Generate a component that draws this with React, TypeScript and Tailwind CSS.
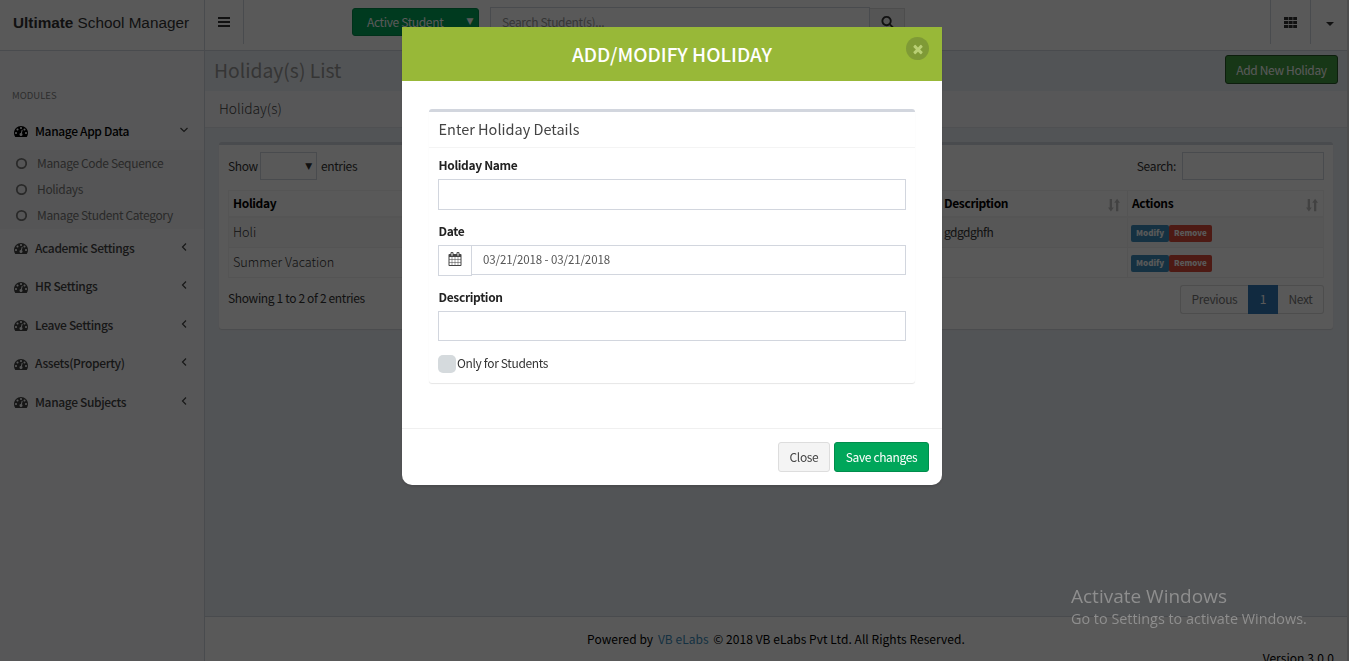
import { useState } from 'react';
import type { ReactNode } from 'react';

const Glyph = ({ d, className }: { d: string; className: string }) => (
  <svg viewBox="0 0 1792 1792" fill="currentColor" className={className}>
    <path d={d} />
  </svg>
);

const TACHOMETER =
  'M384 1152q0-53-37.5-90.5t-90.5-37.5-90.5 37.5-37.5 90.5 37.5 90.5 90.5 37.5 90.5-37.5 37.5-90.5zm192-448q0-53-37.5-90.5t-90.5-37.5-90.5 37.5-37.5 90.5 37.5 90.5 90.5 37.5 90.5-37.5 37.5-90.5zm428 481l101-382q6-26-7.5-48.5t-38.5-29.5-48 6.5-30 39.5l-101 382q-60 5-107 43.5t-63 98.5q-20 77 20 146t117 89 146-20 89-117q16-60-6-117t-72-91zm660-33q0-53-37.5-90.5t-90.5-37.5-90.5 37.5-37.5 90.5 37.5 90.5 90.5 37.5 90.5-37.5 37.5-90.5zm-640-640q0-53-37.5-90.5t-90.5-37.5-90.5 37.5-37.5 90.5 37.5 90.5 90.5 37.5 90.5-37.5 37.5-90.5zm448 192q0-53-37.5-90.5t-90.5-37.5-90.5 37.5-37.5 90.5 37.5 90.5 90.5 37.5 90.5-37.5 37.5-90.5zm320 448q0 261-141 483-19 29-54 29h-1402q-35 0-54-29-141-221-141-483 0-182 71-348t191-286 286-191 348-71 348 71 286 191 191 286 71 348z';
const CALENDAR =
  'M192 1664h288v-288h-288v288zm352 0h320v-288h-320v288zm-352-352h288v-320h-288v320zm352 0h320v-320h-320v320zm-352-384h288v-288h-288v288zm736 736h320v-288h-320v288zm-384-736h320v-288h-320v288zm768 736h288v-288h-288v288zm-384-352h320v-320h-320v320zm-352-864v-288q0-13-9.5-22.5t-22.5-9.5h-64q-13 0-22.5 9.5t-9.5 22.5v288q0 13 9.5 22.5t22.5 9.5h64q13 0 22.5-9.5t9.5-22.5zm736 864h288v-320h-288v320zm-384-384h320v-288h-320v288zm384 0h288v-288h-288v288zm32-480v-288q0-13-9.5-22.5t-22.5-9.5h-64q-13 0-22.5 9.5t-9.5 22.5v288q0 13 9.5 22.5t22.5 9.5h64q13 0 22.5-9.5t9.5-22.5zm384-64v1280q0 52-38 90t-90 38h-1408q-52 0-90-38t-38-90v-1280q0-52 38-90t90-38h128v-96q0-66 47-113t113-47h64q66 0 113 47t47 113v96h384v-96q0-66 47-113t113-47h64q66 0 113 47t47 113v96h128q52 0 90 38t38 90z';
const SEARCH =
  'M1216 832q0-185-131.5-316.5t-316.5-131.5-316.5 131.5-131.5 316.5 131.5 316.5 316.5 131.5 316.5-131.5 131.5-316.5zm512 832q0 52-38 90t-90 38q-54 0-90-38l-343-342q-179 124-399 124-143 0-273.5-55.5t-225-150-150-225-55.5-273.5 55.5-273.5 150-225 225-150 273.5-55.5 273.5 55.5 225 150 150 225 55.5 273.5q0 220-124 399l343 343q37 37 37 90z';
const TIMES =
  'M1490 1322q0 40-28 68l-136 136q-28 28-68 28t-68-28l-294-294-294 294q-28 28-68 28t-68-28l-136-136q-28-28-28-68t28-68l294-294-294-294q-28-28-28-68t28-68l136-136q28-28 68-28t68 28l294 294 294-294q28-28 68-28t68 28l136 136q28 28 28 68t-28 68l-294 294 294 294q28 28 28 68z';

const modules = ['Academic Settings', 'HR Settings', 'Leave Settings', 'Assets(Property)', 'Manage Subjects'];
const appDataLinks = ['Manage Code Sequence', 'Holidays', 'Manage Student Category'];
const holidays = [
  { name: 'Holi', description: 'gdgdghfh' },
  { name: 'Summer Vacation', description: '' },
];

const SortIcon = () => (
  <svg viewBox="0 0 12 14" className="w-3 h-3.5 mt-[4px] text-[#bdbdbd]" fill="currentColor">
    <path d="M1.700 1h2.300v8.500h1.800L2.900 13.400 0 9.500h1.700zM8 13.200V4.700H6.200L9.100 .8l2.900 3.900h-1.700v8.500z" />
  </svg>
);

const Sidebar = () => (
  <aside className="w-[205px] shrink-0 bg-[#f9fafc] border-r border-[#d2d6de]">
    <div className="h-[51px] bg-white border-b border-[#d2d6de] pl-[13px] pt-[12px] text-[15.300px] leading-[22px] tracking-normal font-['Liberation_Sans',sans-serif] text-[#333] whitespace-nowrap">
      <b>Ultimate</b> School Manager
    </div>
    <div className="pt-[36px] pl-3 h-[62px] text-[9.500px] leading-[16px] tracking-normal text-[#848484]">MODULES</div>
    <div className="h-[37px] pl-[14px] pr-[15px] pb-[1px] flex items-center text-black">
      <Glyph d={TACHOMETER} className="w-[14px] h-[14px]" />
      <span className="ml-[7px] mb-[2px] flex-1 font-medium">Manage App Data</span>
      <svg viewBox="0 0 10 10" className="w-[10px] h-[10px] mb-[3px]" fill="none" stroke="#444" strokeWidth="1.2">
        <path d="M1.500 3L5 6.500 8.500 3" />
      </svg>
    </div>
    <div className="bg-[#f4f4f5] h-[79px] pl-[15px]">
      {appDataLinks.map((link) => (
        <div key={link} className="h-[26px] flex items-center text-[#777]">
          <svg viewBox="0 0 12 12" className="w-3 h-3" fill="none" stroke="currentColor" strokeWidth="1.800">
            <circle cx="6.500" cy="6.500" r="4.700" />
          </svg>
          <span className="ml-[10px] mb-[2px]">{link}</span>
        </div>
      ))}
    </div>
    {modules.map((name) => (
      <div key={name} className="h-[38.500px] pl-[14px] pr-[15px] flex items-center text-[#444]">
        <Glyph d={TACHOMETER} className="w-[14px] h-[14px]" />
        <span className="ml-[7px] mb-[2px] flex-1 font-medium">{name}</span>
        <svg viewBox="0 0 10 10" className="w-[10px] h-[10px] mb-[3px]" fill="none" stroke="currentColor" strokeWidth="1.200">
          <path d="M7 1.500L3.500 5 7 8.500" />
        </svg>
      </div>
    ))}
  </aside>
);

const Navbar = () => (
  <header className="h-[51px] bg-white border-b border-[#d2d6de] flex">
    <div className="w-[39px] h-[44px] border-r border-[#d2d6de] flex items-center justify-center">
      <svg viewBox="0 0 12 10" className="w-3 h-2.5" fill="#333">
        <path d="M0 0h12v2H0zM0 4h12v2H0zM0 8h12v2H0z" />
      </svg>
    </div>
    <div className="ml-[108px] mt-2 w-[127px] h-[28px] rounded-[3px] bg-[#00a65a] border border-[#008d4c] text-white flex items-center justify-between pl-[14px] pr-[5px] pb-[2px]">
      <span>Active Student</span>
      <span className="text-[9px] leading-none font-['DejaVu_Sans',sans-serif]">▼</span>
    </div>
    <div className="ml-[11px] mt-[7px] w-[380px] h-[31px] border border-[#d2d6de] pl-[11px] pb-[2px] flex items-center text-[#999]">
      Search Student(s)...
    </div>
    <div className="mt-2 w-[35px] h-[30px] bg-[#f4f4f4] border border-l-0 border-[#ddd] flex justify-center pt-[6px]">
      <Glyph d={SEARCH} className="w-[13px] h-[13px] text-[#333]" />
    </div>
    <div className="ml-auto h-[44px] w-[40px] border-l border-[#d2d6de] flex items-center justify-center">
      <svg viewBox="0 0 13 11" className="w-[13px] h-[11px]" fill="#333">
        <path d="M0 0h4v3H0zM4.600 0h4v3h-4zM9.200 0h3.800v3H9.200zM0 4h4v3H0zM4.600 4h4v3h-4zM9.200 4h3.800v3H9.200zM0 8h4v3H0zM4.600 8h4v3h-4zM9.200 8h3.800v3H9.200z" />
      </svg>
    </div>
    <div className="h-[44px] w-[37px] border-l border-[#d2d6de] flex items-center justify-center pt-1 pl-[1px]">
      <svg viewBox="0 0 8 4" className="w-2 h-1" fill="#333">
        <path d="M0 0h8L4 4z" />
      </svg>
    </div>
  </header>
);

const HolidayList = () => (
  <section className="mx-[14px] mt-[14px] h-[187px] bg-white rounded-[3px] border-t-[3px] border-[#d2d6de] shadow-[0_1px_1px_rgba(0,0,0,0.1)] px-[9px] text-[#333]">
    <div className="h-[45px] pt-[7px] flex items-start">
      <div className="h-[28px] flex items-center">
        <span className="mb-[2px]">Show</span>
        <span className="ml-[2px] mr-[4px] w-[57px] h-[28px] border border-[#d2d6de] flex items-center justify-end pr-[4px] text-[9px] font-['DejaVu_Sans',sans-serif]">▼</span>
        <span className="mb-[2px]">entries</span>
      </div>
      <div className="ml-auto h-[28px] flex items-center">
        <span className="mb-[2px]">Search:</span>
        <span className="ml-[6px] w-[142px] h-[28px] border border-[#d2d6de]" />
      </div>
    </div>
    <div className="border border-b-0 border-[#f4f4f4]">
      <div className="h-[27px] flex border-b-2 border-[#f4f4f4] font-bold text-black">
        <div className="w-[710px] pl-[4px] pb-[2px] flex items-center">Holiday</div>
        <div className="w-[189px] pl-[5px] pr-[7px] pb-[2px] flex items-center justify-between border-r border-[#f0f0f0]">
          Description
          <SortIcon />
        </div>
        <div className="flex-1 pl-[4px] pr-[5px] pb-[2px] flex items-center justify-between">
          Actions
          <SortIcon />
        </div>
      </div>
      {holidays.map((row) => (
        <div key={row.name} className="h-[30px] flex border-b border-[#f0f0f0] odd:bg-white even:bg-[#f9f9f9]">
          <div className="w-[710px] pl-[4px] pb-[2px] flex items-center font-light text-[12.700px] tracking-normal">{row.name}</div>
          <div className="w-[189px] pl-[5px] pb-[3px] flex items-center border-r border-[#f0f0f0] tracking-[-0.5px]">{row.description}</div>
          <div className="pl-[3px] pt-[2px] flex items-center text-[8px] leading-[16px] tracking-normal font-black text-white">
            <span className="w-[38px] h-[17px] rounded-[2px] bg-[#3c8dbc] text-center">Modify</span>
            <span className="w-[43px] h-[17px] rounded-[2px] bg-[#dd4b39] text-center">Remove</span>
          </div>
        </div>
      ))}
    </div>
    <div className="flex items-start justify-between pt-[7px]">
      <span className="pt-[4px]">Showing 1 to 2 of 2 entries</span>
      <div className="h-[29px] flex items-stretch leading-[26px] text-[#777]">
        <span className="w-[68px] rounded-l-[3px] border border-r-0 border-[#ddd] text-center">Previous</span>
        <span className="w-[30px] bg-[#337ab7] border border-[#337ab7] text-white text-center">1</span>
        <span className="w-[46px] rounded-r-[3px] border border-l-0 border-[#ddd] text-center">Next</span>
      </div>
    </div>
  </section>
);

const Field = ({ label, children }: { label: string; children: ReactNode }) => (
  <div className="h-[66px]">
    <div className="h-[22px] pl-[0.500px] font-bold text-[#222] leading-[15px]">{label}</div>
    {children}
  </div>
);

const HolidayModal = ({ onClose }: { onClose: () => void }) => {
  const [period, setPeriod] = useState('03/21/2018 - 03/21/2018');

  return (
    <div className="fixed inset-0 bg-black/65">
      <div className="ml-[402px] mt-[27px] w-[540px] h-[458px] bg-white rounded-b-[10px] shadow-[0_2px_3px_rgba(0,0,0,0.12)] flex flex-col">
        <div className="relative h-[54px] pb-[2px] bg-[#98b838] text-white text-[19px] tracking-normal font-medium flex items-center justify-center">
          ADD/MODIFY HOLIDAY
          <button
            onClick={onClose}
            className="absolute right-[13px] top-[10px] w-[23px] h-[23px] rounded-full bg-[#7f9a36] text-[#b9cf74] flex items-center justify-center"
          >
            <Glyph d={TIMES} className="w-[14px] h-[14px] mt-[1px]" />
          </button>
        </div>
        <div className="h-[347px] px-[27px] pt-[28px]">
          <div className="h-[274px] rounded-[3px] border-t-[3px] border-[#d2d6de] shadow-[0_1px_1px_rgba(0,0,0,0.1)]">
            <div className="h-[36px] px-[9.500px] pb-[2px] border-b border-[#f4f4f4] flex items-center text-[14.500px] tracking-normal text-[#444]">
              Enter Holiday Details
            </div>
            <div className="px-[9px] pt-[9px]">
              <Field label="Holiday Name">
                <input className="block w-full h-[31px] border border-[#d2d6de] outline-none" />
              </Field>
              <Field label="Date">
                <div className="flex items-start">
                  <span className="w-[34px] h-[31px] border border-[#d2d6de] flex items-center justify-center text-[#444]">
                    <Glyph d={CALENDAR} className="w-[14px] h-[14px] mb-1" />
                  </span>
                  <input
                    value={period}
                    onChange={(e) => setPeriod(e.target.value)}
                    className="flex-1 h-[30px] pb-[2px] border border-l-0 border-[#d2d6de] pl-[11px] text-[11.500px] tracking-[-0.1px] text-[#555] outline-none"
                  />
                </div>
              </Field>
              <Field label="Description">
                <input className="block w-full h-[30px] border border-[#d2d6de] outline-none" />
              </Field>
              <label className="flex items-center h-[18px] text-[#333]">
                <span className="w-[18px] h-[18px] rounded-[5px] bg-[#d5dadd] mr-[1px]" />
                <span className="mb-[3px]">Only for Students</span>
              </label>
            </div>
          </div>
        </div>
        <div className="flex-1 border-t border-[#f0f0f0] pt-[13px] pr-[13px] flex justify-end items-start gap-1">
          <button onClick={onClose} className="w-[52px] h-[30px] pb-[2px] rounded-[3px] bg-[#f4f4f4] border border-[#ddd] text-[#444]">
            Close
          </button>
          <button className="w-[95px] h-[30px] pb-[2px] rounded-[3px] bg-[#00a65a] border border-[#008d4c] text-white">
            Save changes
          </button>
        </div>
      </div>
    </div>
  );
};

const App = () => {
  const [modalOpen, setModalOpen] = useState(true);

  return (
    <div className="relative h-[661px] overflow-hidden flex bg-[#ecf0f5] font-['Noto_Sans_CJK_SC',sans-serif] text-[12px] leading-[17px] tracking-[-0.35px] whitespace-nowrap">
      <Sidebar />
      <main className="flex-1 flex flex-col border-r-2 border-[#dcdcdc]">
        <Navbar />
        <div className="h-[40px] pl-[9px] pr-[9px] flex items-center justify-between">
          <h1 className="mb-[2px] text-[19.300px] tracking-normal text-[#999]">Holiday(s) List</h1>
          <button
            onClick={() => setModalOpen(true)}
            className="w-[113px] h-[29px] mt-[-3px] pb-[1px] rounded-[3px] bg-[#449d44] border border-[#255625] text-white"
          >
            Add New Holiday
          </button>
        </div>
        <div className="h-[37px] bg-[#f9fafc] border-b border-[#e2e5ea] pl-[14px] pb-[2px] flex items-center text-[13.800px] tracking-normal font-light text-[#444]">
          Holiday(s)
        </div>
        <HolidayList />
        <footer className="mt-auto h-[45px] bg-white border-t border-[#d2d6de] pt-[13px] tracking-[0.04px] text-black">
          <div className="text-center leading-[18px]">
            Powered by <a className="mx-[2px] text-[#3c8dbc]">VB eLabs</a> © 2018 VB eLabs Pvt Ltd. All Rights Reserved.
          </div>
          <div className="text-right pt-[1px] pr-[13px] leading-[18px]">Version 3.0.0</div>
        </footer>
      </main>
      {modalOpen && <HolidayModal onClose={() => setModalOpen(false)} />}
      <div className="absolute left-[1071px] top-[584px] font-['Open_Sans',sans-serif] tracking-normal text-[#8e8e8e]">
        <div className="text-[19px] leading-[24px]">Activate Windows</div>
        <div className="text-[14.400px] leading-[22px]">Go to Settings to activate Windows.</div>
      </div>
    </div>
  );
};

export default App;
